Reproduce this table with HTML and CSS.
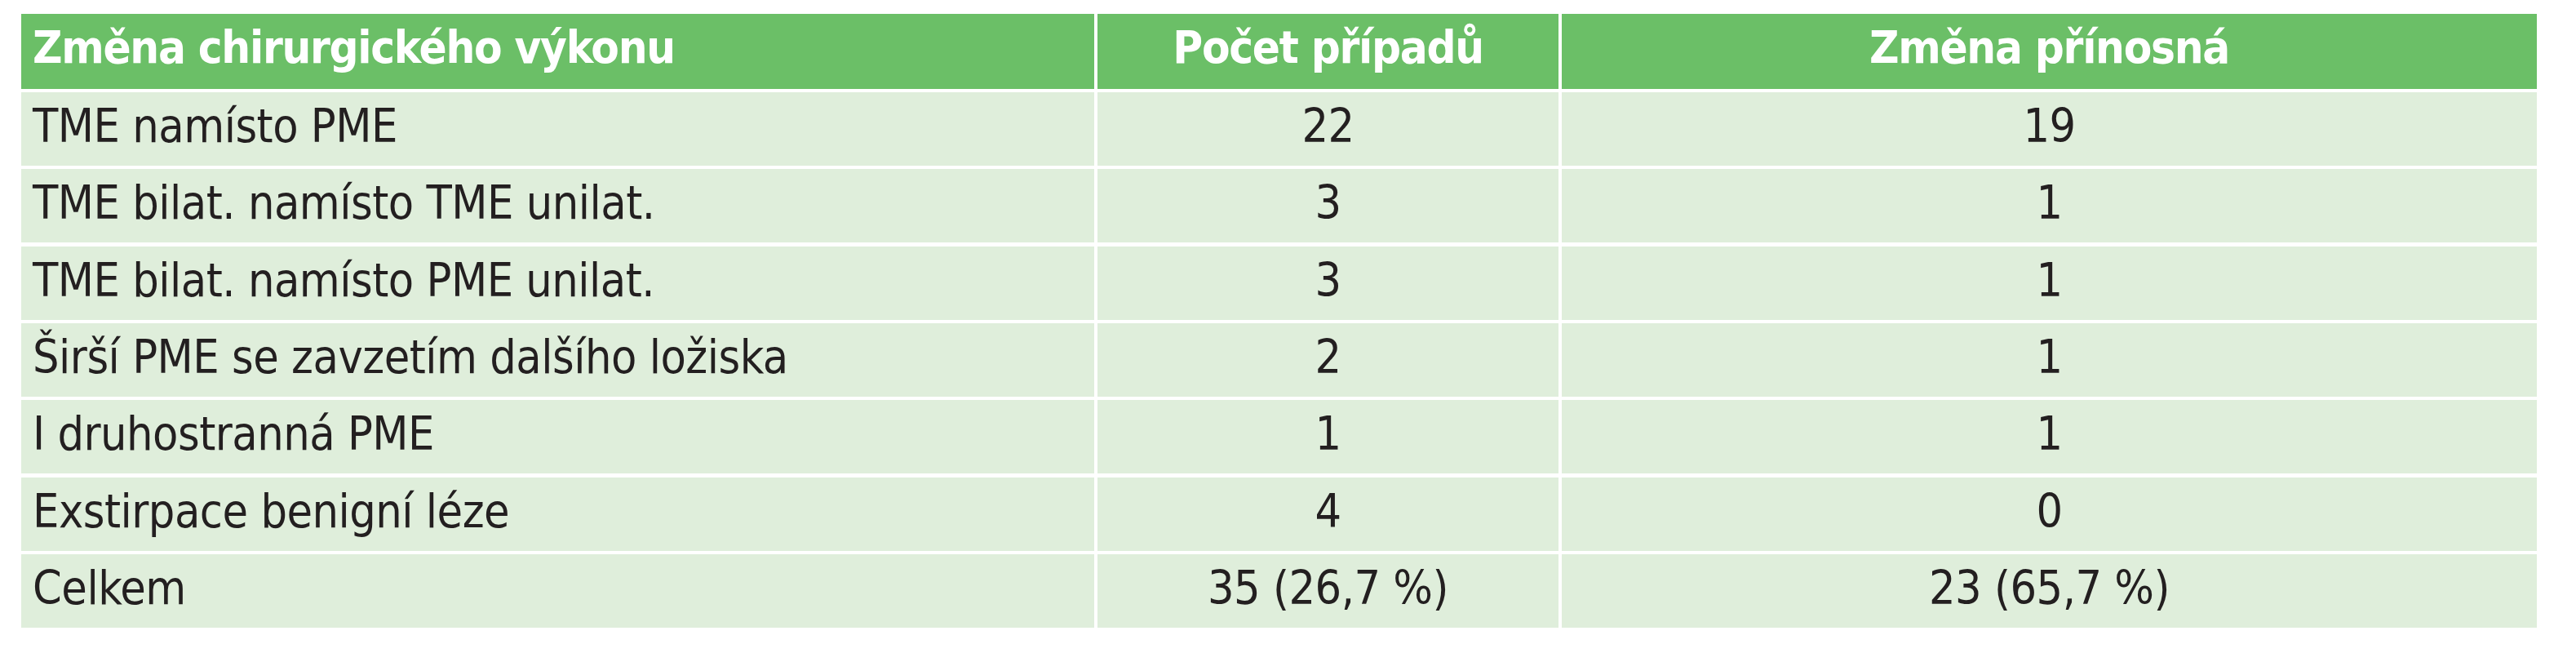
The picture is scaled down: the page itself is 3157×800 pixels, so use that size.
FILE: index.html
```html
<!DOCTYPE html>
<html lang="cs">
<head>
<meta charset="utf-8">
<title>Změna chirurgického výkonu</title>
<link rel="stylesheet" href="styles.css">
</head>
<body>
<div class="tbl">
  <div class="cell head left">Změna chirurgického výkonu</div>
  <div class="cell head">Počet případů</div>
  <div class="cell head">Změna přínosná</div>

  <div class="cell left">TME namísto PME</div>
  <div class="cell">22</div>
  <div class="cell">19</div>

  <div class="cell left">TME bilat. namísto TME unilat.</div>
  <div class="cell">3</div>
  <div class="cell">1</div>

  <div class="cell left">TME bilat. namísto PME unilat.</div>
  <div class="cell">3</div>
  <div class="cell">1</div>

  <div class="cell left">Širší PME se zavzetím dalšího ložiska</div>
  <div class="cell">2</div>
  <div class="cell">1</div>

  <div class="cell left">I druhostranná PME</div>
  <div class="cell">1</div>
  <div class="cell">1</div>

  <div class="cell left">Exstirpace benigní léze</div>
  <div class="cell">4</div>
  <div class="cell">0</div>

  <div class="cell left">Celkem</div>
  <div class="cell">35 (26,7 %)</div>
  <div class="cell">23 (65,7 %)</div>
</div>
</body>
</html>
```

FILE: styles.css
```css
html, body {
  margin: 0;
  background: #ffffff;
}
body {
  padding: 17px 48px 0 26px;
  font-family: "DejaVu Sans Condensed", "DejaVu Sans", sans-serif;
  font-stretch: condensed;
  color: #231f20;
}
.tbl {
  display: grid;
  grid-template-columns: 1315px 565px 1195px;
  grid-template-rows: 91.67px repeat(7, 90px);
  column-gap: 4px;
  row-gap: 4.33px;
  width: 3083px;
}
.cell {
  background: #dfeedb;
  display: flex;
  align-items: center;
  justify-content: center;
  font-size: 57px;
  letter-spacing: -0.5px;
  padding-bottom: 8px;
  box-sizing: border-box;
  white-space: nowrap;
}
.cell.left {
  justify-content: flex-start;
  padding-left: 14px;
}
.cell.head {
  background: #6bbf67;
  color: #ffffff;
  font-weight: bold;
  font-size: 56px;
  letter-spacing: -1.3px;
  padding-bottom: 10px;
}
```
